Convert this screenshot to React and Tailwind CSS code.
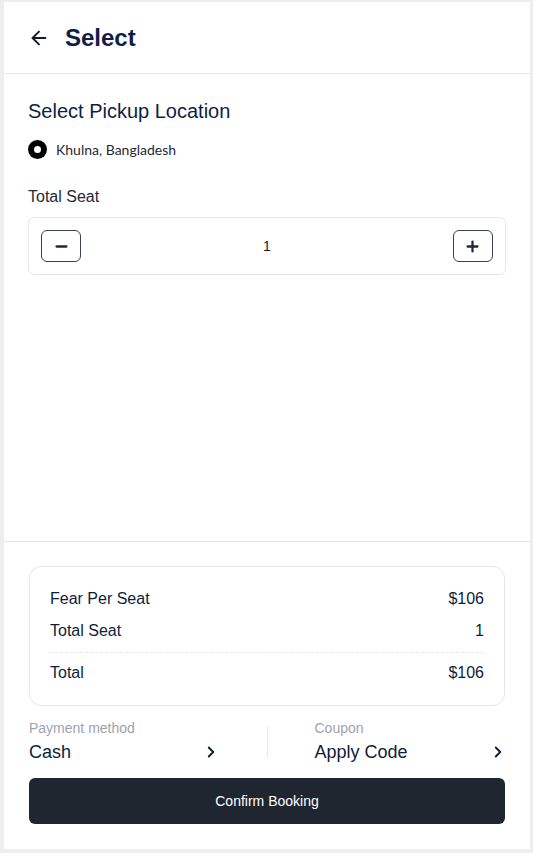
import React, { useState } from 'react';
import { ArrowLeft, Minus, Plus, ChevronRight } from 'lucide-react';

const font = { fontFamily: '"Liberation Sans", Arial, sans-serif' };

const App = () => {
  const [seats, setSeats] = useState(1);
  const fare = 106;

  return (
    <div className="h-[853px] bg-[#eceeef] pt-[2px] pl-[4px] pr-[3px] pb-[4px]" style={font}>
      <div className="flex h-full flex-col bg-white">
        {/* Header */}
        <header className="flex h-[72px] items-center gap-[15px] border-b border-[#e5e7eb] px-6">
          <ArrowLeft className="h-[22px] w-[22px] text-[#111827]" strokeWidth={2} />
          <h1 className="text-[24px] font-bold text-[#0f1d48]">Select</h1>
        </header>

        {/* Contenido */}
        <main className="flex-1 px-6 pt-[23px]">
          <h2 className="text-[20px] leading-7 text-[#0f1d48]">Select Pickup Location</h2>
          <label className="mt-[14px] flex items-center gap-[9px]">
            <span className="flex h-[19px] w-[19px] items-center justify-center rounded-full bg-black">
              <span className="h-[7px] w-[7px] rounded-full bg-white" />
            </span>
            <span className="text-[14px] text-[#1f2937]" style={{ fontFamily: 'Lato, "Noto Sans", sans-serif' }}>
              Khulna, Bangladesh
            </span>
          </label>

          <p className="mt-[25px] text-[16px] leading-6 text-[#1f2937]">Total Seat</p>
          <div className="mt-[8px] flex h-[58px] items-center justify-between rounded-md border border-[#e5e7eb] px-3">
            <button
              onClick={() => setSeats(s => Math.max(1, s - 1))}
              className="flex h-[32px] w-[40px] items-center justify-center rounded-md border border-[#374151]"
            >
              <Minus className="h-[17px] w-[17px] text-[#1f2937]" strokeWidth={3.2} />
            </button>
            <span className="text-[14px] text-[#111827]">{seats}</span>
            <button
              onClick={() => setSeats(s => s + 1)}
              className="flex h-[32px] w-[40px] items-center justify-center rounded-md border border-[#374151]"
            >
              <Plus className="h-[17px] w-[17px] text-[#1f2937]" strokeWidth={3.2} />
            </button>
          </div>
        </main>

        {/* Resumen */}
        <section className="border-t border-[#e5e7eb] px-[25px] pt-[24px] pb-[25px]">
          <div className="rounded-xl border border-[#e5e7eb] px-5 pt-[20px] pb-[20px] text-[16px] leading-6 text-[#0f1d3a]">
            <div className="flex justify-between">
              <span>Fear Per Seat</span>
              <span>${fare}</span>
            </div>
            <div className="mt-2 flex justify-between">
              <span>Total Seat</span>
              <span>{seats}</span>
            </div>
            <div className="mt-[9px] border-t border-dashed border-[#e5e7eb]" />
            <div className="mt-2 flex justify-between">
              <span>Total</span>
              <span>${fare * seats}</span>
            </div>
          </div>

          <div className="mt-[12px] flex items-center">
            <div className="flex-1 pr-[47px]">
              <p className="text-[14px] leading-5 text-[#9ca3af]">Payment method</p>
              <div className="flex items-center justify-between">
                <span className="text-[18px] leading-7 text-[#0f1d3a]">Cash</span>
                <ChevronRight className="h-[18px] w-[18px] text-[#0f1d3a]" strokeWidth={2.5} />
              </div>
            </div>
            <div className="h-[32px] w-px bg-[#e5e7eb]" />
            <div className="flex-1 pl-[47px]">
              <p className="text-[14px] leading-5 text-[#9ca3af]">Coupon</p>
              <div className="flex items-center justify-between">
                <span className="text-[18px] leading-7 text-[#0f1d3a]">Apply Code</span>
                <ChevronRight className="-mr-[2px] h-[18px] w-[18px] text-[#0f1d3a]" strokeWidth={2.5} />
              </div>
            </div>
          </div>

          <button className="mt-[12px] h-[46px] w-full rounded-md bg-[#1f2630] text-[14px] text-white">
            Confirm Booking
          </button>
        </section>
      </div>
    </div>
  );
};

export default App;
